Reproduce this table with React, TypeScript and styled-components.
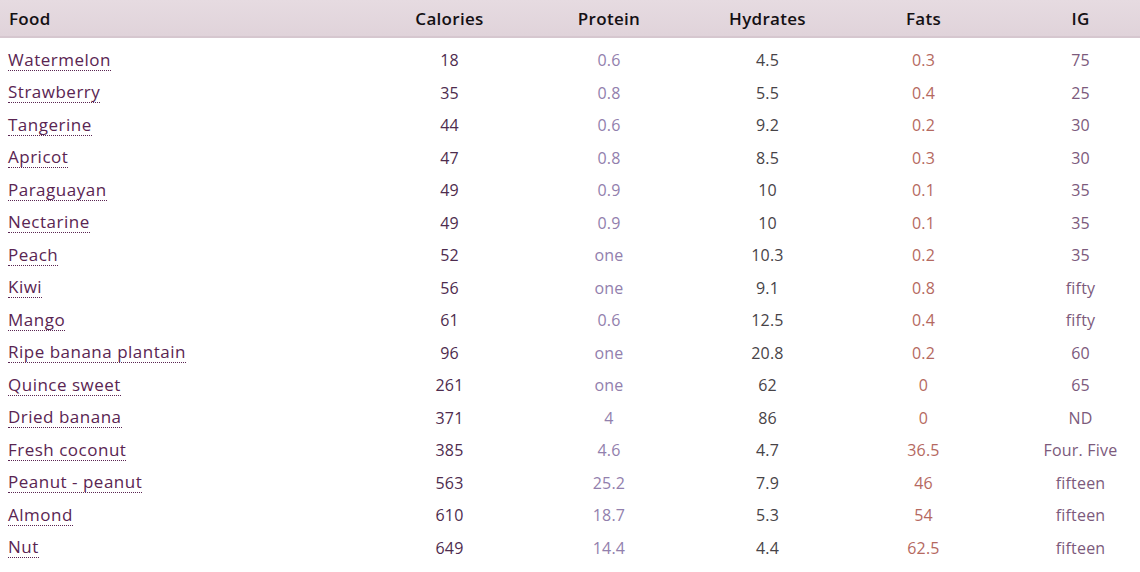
import React from "react";
import styled, { createGlobalStyle } from "styled-components";

const Global = createGlobalStyle`
  html, body { margin: 0; padding: 0; background: #ffffff; overflow: hidden; }
  body { font-family: "Open Sans", "Noto Sans", "Liberation Sans", sans-serif; }
`;

const Table = styled.div`
  width: 1160px;
  display: grid;
  grid-template-columns: 370px 159px 160px 157px 155px 159px;
`;

const HeadCell = styled.div<{ $left?: boolean }>`
  height: 36px;
  display: flex;
  align-items: center;
  justify-content: ${(p) => (p.$left ? "flex-start" : "center")};
  padding-left: ${(p) => (p.$left ? "9px" : "0")};
  background: linear-gradient(#e6dbe1, #e0d3da);
  border-bottom: 2px solid #d6c7cf;
  margin-bottom: 6px;
  color: #141014;
  font-size: 17px;
  font-weight: 600;
  letter-spacing: 0.3px;
`;

type Kind = "cal" | "pro" | "hyd" | "fat" | "ig";

const colors: Record<Kind, string> = {
  cal: "#4e2c4e",
  pro: "#9280ad",
  hyd: "#474347",
  fat: "#b5695f",
  ig: "#7c5a7c",
};

const Cell = styled.div<{ $kind: Kind }>`
  height: 32.5px;
  display: flex;
  align-items: center;
  justify-content: center;
  font-size: 16px;
  letter-spacing: 0.2px;
  color: ${(p) => colors[p.$kind]};
`;

const NameCell = styled.div`
  height: 32.5px;
  display: flex;
  align-items: center;
  padding-left: 8px;
`;

const FoodLink = styled.a`
  color: #5a2552;
  font-size: 17px;
  text-decoration: none;
  border-bottom: 1px dotted #5a2552;
  line-height: 20px;
  letter-spacing: 0.5px;
`;

const rows: [string, string, string, string, string, string][] = [
  ["Watermelon", "18", "0.6", "4.5", "0.3", "75"],
  ["Strawberry", "35", "0.8", "5.5", "0.4", "25"],
  ["Tangerine", "44", "0.6", "9.2", "0.2", "30"],
  ["Apricot", "47", "0.8", "8.5", "0.3", "30"],
  ["Paraguayan", "49", "0.9", "10", "0.1", "35"],
  ["Nectarine", "49", "0.9", "10", "0.1", "35"],
  ["Peach", "52", "one", "10.3", "0.2", "35"],
  ["Kiwi", "56", "one", "9.1", "0.8", "fifty"],
  ["Mango", "61", "0.6", "12.5", "0.4", "fifty"],
  ["Ripe banana plantain", "96", "one", "20.8", "0.2", "60"],
  ["Quince sweet", "261", "one", "62", "0", "65"],
  ["Dried banana", "371", "4", "86", "0", "ND"],
  ["Fresh coconut", "385", "4.6", "4.7", "36.5", "Four. Five"],
  ["Peanut - peanut", "563", "25.2", "7.9", "46", "fifteen"],
  ["Almond", "610", "18.7", "5.3", "54", "fifteen"],
  ["Nut", "649", "14.4", "4.4", "62.5", "fifteen"],
];

const kinds: Kind[] = ["cal", "pro", "hyd", "fat", "ig"];

export default function App() {
  return (
    <>
      <Global />
      <Table>
        <HeadCell $left>Food</HeadCell>
        <HeadCell>Calories</HeadCell>
        <HeadCell>Protein</HeadCell>
        <HeadCell>Hydrates</HeadCell>
        <HeadCell>Fats</HeadCell>
        <HeadCell>IG</HeadCell>
        {rows.map((r) => (
          <React.Fragment key={r[0]}>
            <NameCell>
              <FoodLink href="#">{r[0]}</FoodLink>
            </NameCell>
            {kinds.map((k, i) => (
              <Cell key={k} $kind={k}>
                {r[i + 1]}
              </Cell>
            ))}
          </React.Fragment>
        ))}
      </Table>
    </>
  );
}
